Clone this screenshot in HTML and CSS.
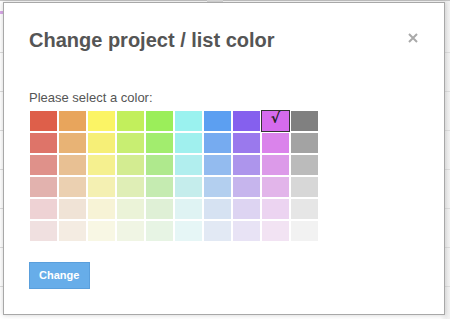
FILE: index.html
```html
<!DOCTYPE html>
<html>
<head>
<meta charset="utf-8">
<link rel="stylesheet" href="styles.css">
</head>
<body>
<div class="backdrop">
  <div class="topbar"><span class="tab"></span></div>
  <div class="mark"></div>
  <div class="rows">
    <div class="row"></div><div class="row"></div><div class="row"></div><div class="row"></div>
    <div class="row"></div><div class="row"></div><div class="row"></div>
  </div>
</div>
<div class="modal">
  <div class="header">
    <h2 class="title">Change project / list color</h2>
    <span class="close"><svg width="10" height="10" viewBox="0 0 10 10"><path d="M1 1L9 9M9 1L1 9" stroke="#a9a9a9" stroke-width="2" stroke-linecap="butt"/></svg></span>
  </div>
  <p class="label">Please select a color:</p>
  <div class="palette">
    <span class="sw" style="background:#de5f4a"></span>
    <span class="sw" style="background:#e8a55c"></span>
    <span class="sw" style="background:#fbf465"></span>
    <span class="sw" style="background:#c2ef5c"></span>
    <span class="sw" style="background:#9bee5a"></span>
    <span class="sw" style="background:#9af2ef"></span>
    <span class="sw" style="background:#5c9ff1"></span>
    <span class="sw" style="background:#8560ee"></span>
    <span class="sw selected" style="background:#d56bed">√</span>
    <span class="sw" style="background:#808080"></span>

    <span class="sw" style="background:#de7469"></span>
    <span class="sw" style="background:#e8b375"></span>
    <span class="sw" style="background:#f6ef77"></span>
    <span class="sw" style="background:#c8ee72"></span>
    <span class="sw" style="background:#a2ed6e"></span>
    <span class="sw" style="background:#a0f0ee"></span>
    <span class="sw" style="background:#76abf0"></span>
    <span class="sw" style="background:#9a79ed"></span>
    <span class="sw" style="background:#da83eb"></span>
    <span class="sw" style="background:#a3a3a3"></span>

    <span class="sw" style="background:#df918a"></span>
    <span class="sw" style="background:#e8c093"></span>
    <span class="sw" style="background:#f5f08f"></span>
    <span class="sw" style="background:#d3ec91"></span>
    <span class="sw" style="background:#afe98d"></span>
    <span class="sw" style="background:#b1eeee"></span>
    <span class="sw" style="background:#93bbef"></span>
    <span class="sw" style="background:#ad95ec"></span>
    <span class="sw" style="background:#dc9ae9"></span>
    <span class="sw" style="background:#bbbbbb"></span>

    <span class="sw" style="background:#e2b2ae"></span>
    <span class="sw" style="background:#ebd0b1"></span>
    <span class="sw" style="background:#f4f0b2"></span>
    <span class="sw" style="background:#dfeeb6"></span>
    <span class="sw" style="background:#c5ebb1"></span>
    <span class="sw" style="background:#c5edec"></span>
    <span class="sw" style="background:#b3cfef"></span>
    <span class="sw" style="background:#c6b5ed"></span>
    <span class="sw" style="background:#e2b5ea"></span>
    <span class="sw" style="background:#d7d7d7"></span>

    <span class="sw" style="background:#eed2d4"></span>
    <span class="sw" style="background:#f0e3d6"></span>
    <span class="sw" style="background:#f7f3d6"></span>
    <span class="sw" style="background:#ebf3d8"></span>
    <span class="sw" style="background:#dff0d6"></span>
    <span class="sw" style="background:#dff3f3"></span>
    <span class="sw" style="background:#d6e2f2"></span>
    <span class="sw" style="background:#ddd4f2"></span>
    <span class="sw" style="background:#ecd4f1"></span>
    <span class="sw" style="background:#e6e6e6"></span>

    <span class="sw" style="background:#f0e0e0"></span>
    <span class="sw" style="background:#f4ece2"></span>
    <span class="sw" style="background:#f8f7e4"></span>
    <span class="sw" style="background:#f0f5e4"></span>
    <span class="sw" style="background:#e7f4e4"></span>
    <span class="sw" style="background:#e6f6f6"></span>
    <span class="sw" style="background:#e2e9f4"></span>
    <span class="sw" style="background:#e8e3f5"></span>
    <span class="sw" style="background:#f2e3f3"></span>
    <span class="sw" style="background:#f2f2f2"></span>
  </div>
  <button class="btn">Change</button>
</div>
</body>
</html>
```

FILE: styles.css
```css
html, body {
  margin: 0;
  padding: 0;
  background: #ffffff;
  font-family: "Liberation Sans", Arial, sans-serif;
  width: 450px;
  height: 319px;
  overflow: hidden;
}

.backdrop {
  width: 450px;
  height: 319px;
  background: linear-gradient(to right, #ffffff 0, #ffffff 440px, #eeeeee 446px, #f2f2f2 450px);
}

.topbar {
  height: 1px;
  background: #c4c4c4;
  display: flex;
  justify-content: center;
}

.tab {
  width: 16px;
  height: 2px;
  margin-left: -20px;
  background: #dddddd;
}

.mark {
  width: 6px;
  height: 3px;
  margin-top: 10px;
  background: #d9a8e8;
}

.rows {
  padding-top: 0;
}

.row {
  height: 38px;
  border-bottom: 1px solid #dddddd;
}

.modal {
  position: absolute;
  left: 3px;
  top: 2px;
  width: 440px;
  height: 311px;
  box-sizing: content-box;
  border: 1px solid #a8a8a8;
  background: #ffffff;
  box-shadow: 0 0 5px rgba(0, 0, 0, 0.18);
  padding: 0;
}

.header {
  display: flex;
  justify-content: space-between;
  align-items: flex-start;
  padding: 25px 26px 0 25px;
}

.title {
  margin: 0;
  font-size: 20px;
  line-height: 24px;
  font-weight: bold;
  color: #555555;
}

.close {
  display: flex;
  margin-top: 5px;
  width: 10px;
  height: 10px;
}

.label {
  margin: 38px 0 0 25px;
  font-size: 13px;
  line-height: 16px;
  color: #555555;
}

.palette {
  display: grid;
  grid-template-columns: repeat(10, 27px);
  grid-auto-rows: 20px;
  gap: 2px;
  margin: 5px 0 0 26px;
  width: max-content;
}

.sw {
  display: block;
  font-family: "DejaVu Sans", sans-serif;
  font-size: 14px;
  font-weight: bold;
  line-height: 14px;
  text-align: center;
  color: #222222;
}

.selected {
  outline: 1px solid #333333;
}

.btn {
  display: block;
  margin: 21px 0 0 25px;
  padding: 6px 10px 6px 9px;
  border: 1px solid #5a9fdc;
  border-radius: 0;
  background: #67ade9;
  color: #ffffff;
  font-family: "Liberation Sans", Arial, sans-serif;
  font-size: 11px;
  line-height: 13px;
  font-weight: bold;
}
```
